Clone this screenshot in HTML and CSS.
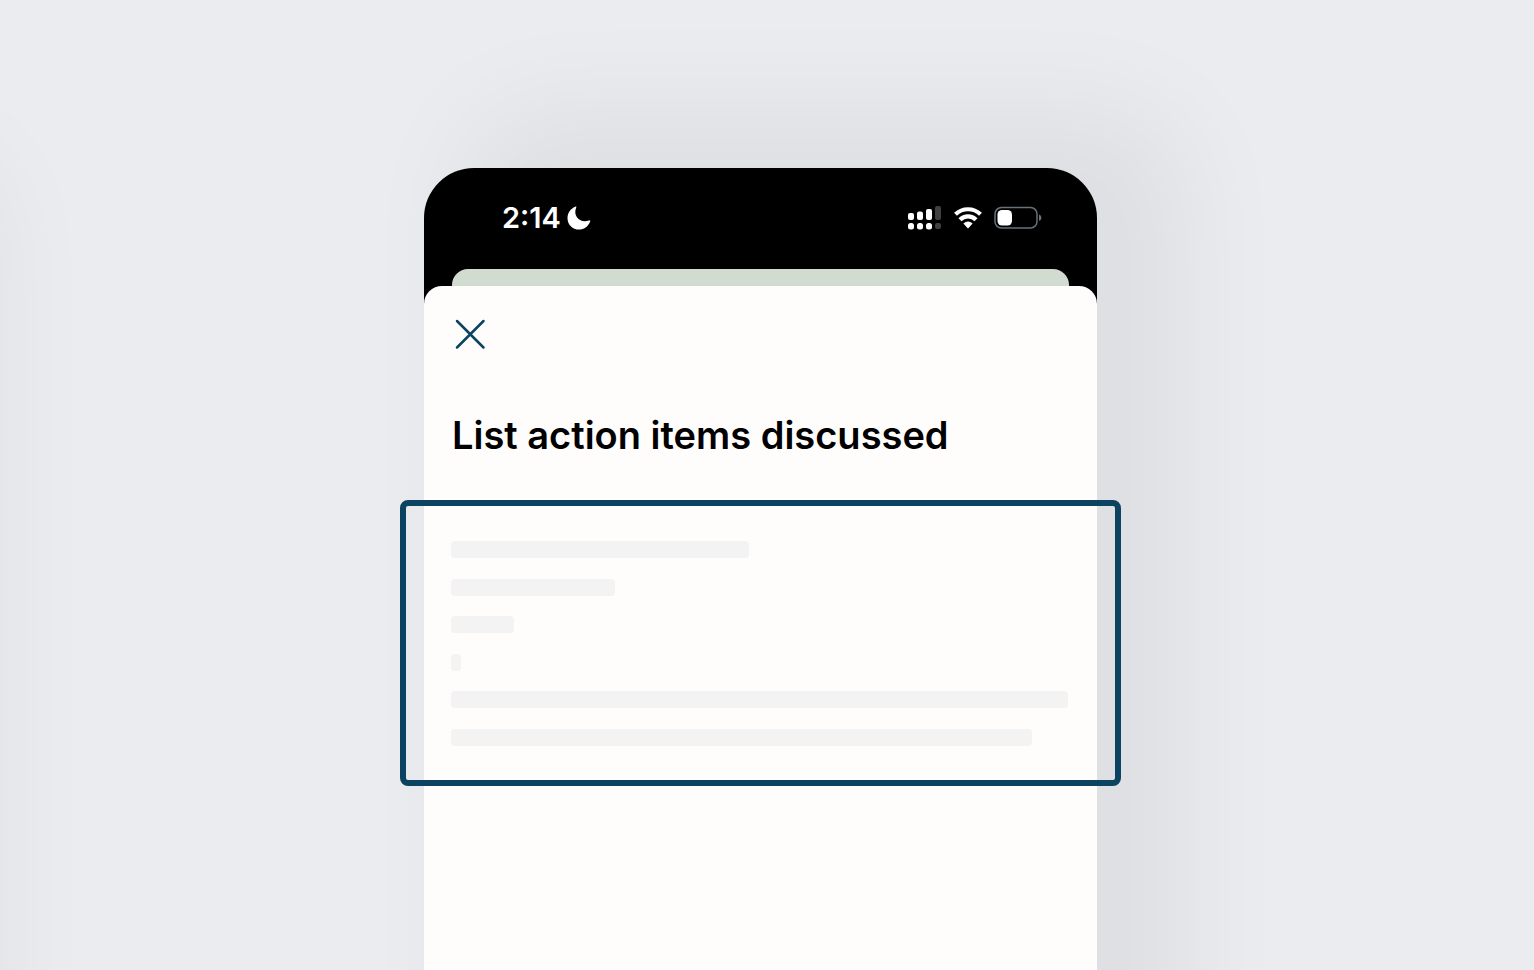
FILE: index.html
```html
<!DOCTYPE html>
<html lang="en">
<head>
<meta charset="utf-8">
<meta name="viewport" content="width=device-width, initial-scale=1">
<title>List action items discussed</title>
<link rel="stylesheet" href="styles.css">
</head>
<body>
<main class="stage">
  <div class="phone">
    <header class="status">
      <div class="status-group clock">
        <time>2:14</time>
        <svg width="24" height="24" viewBox="0 0 24 24" aria-hidden="true"><path d="M8.200.8C9.200.2 9.700.6 9.200 1.500C5.800 10 12.500 17.300 21.800 14.600C23.100 14.200 23.600 14.600 23.100 15.700C21 20.600 16.800 23.600 12 23.600C5.600 23.600.5 18.600.5 12.200C.5 7 3.500 2.800 8.200.8Z" fill="#fff"/></svg>
      </div>
      <div class="status-group radios">
        <svg width="34" height="24" viewBox="0 0 34 24" aria-hidden="true">
          <g fill="#fff">
            <rect x="0" y="7" width="6" height="7" rx="2"/><rect x="9" y="5.500" width="6" height="8.500" rx="2"/><rect x="18" y="3" width="6" height="11" rx="2"/>
            <rect x="0" y="17" width="6" height="6.500" rx="2.500"/><rect x="9" y="17" width="6" height="6.500" rx="2.500"/><rect x="18" y="17" width="6" height="6.500" rx="2.500"/>
          </g>
          <g fill="#404040"><rect x="27" y="0" width="6" height="14" rx="2"/><rect x="27" y="17" width="6" height="6" rx="2"/></g>
        </svg>
        <svg width="28" height="24" viewBox="0 0 28 24" aria-hidden="true">
          <g fill="none" stroke="#fff" stroke-width="4.200"><path d="M1.500 8.300A18 18 0 0 1 26.500 8.300"/><path d="M6 13.700A11.200 11.200 0 0 1 22 13.700"/></g>
          <path d="M9.400 17.400Q14 13.800 18.600 17.400L14.600 21.900Q14 22.500 13.400 21.900Z" fill="#fff"/>
        </svg>
        <svg width="48" height="24" viewBox="0 0 48 24" aria-hidden="true">
          <rect x="1" y="1.500" width="42" height="20.500" rx="6.500" fill="none" stroke="#66727b" stroke-width="1.500"/>
          <rect x="3.500" y="4" width="14.500" height="15.500" rx="4.500" fill="#fff"/>
          <path d="M45 8.500Q47.500 9.500 47.500 11.700Q47.500 14 45 15Z" fill="#66727b"/>
        </svg>
      </div>
    </header>
    <div class="back-sheet"></div>
    <section class="sheet">
      <button class="close" type="button" aria-label="Close">
        <svg width="32" height="32" viewBox="0 0 32 32" aria-hidden="true"><path d="M3 3L29.500 29.500M29.500 3L3 29.500" stroke="#0b4361" stroke-width="2.500" stroke-linecap="round"/></svg>
      </button>
      <h1 class="title">List action items discussed</h1>
      <div class="highlight" role="status" aria-label="Loading">
        <div class="lines">
          <span class="line" style="width:48.300%"></span>
          <span class="line" style="width:26.500%"></span>
          <span class="line" style="width:10.200%"></span>
          <span class="line" style="width:1.600%"></span>
          <span class="line" style="width:100%"></span>
          <span class="line" style="width:94.200%"></span>
        </div>
      </div>
    </section>
  </div>
</main>
</body>
</html>
```
FILE: styles.css
```css
* { box-sizing: border-box; }

body {
  margin: 0;
  background: #ebecf0;
  font-family: Inter, "Liberation Sans", sans-serif;
}

.stage {
  position: relative;
  display: grid;
  grid-template-columns: 424fr 673fr 437fr;
  min-height: 100vh;
  padding-top: 168px;
  overflow: hidden;
}

.phone,
.stage::before {
  border-radius: 50px 50px 0 0;
  background: #000;
  box-shadow: 65px -35px 110px 25px rgba(0, 0, 0, 0.055);
}

/* Neighbouring phone, outside the left edge: only its shadow shows */
.stage::before {
  content: "";
  position: absolute;
  top: 208px;
  right: calc(100% + 95px);
  bottom: -200px;
  width: 44%;
}

/* The phone runs on past the bottom edge of the stage */
.phone {
  grid-column: 2;
  display: flex;
  flex-direction: column;
  margin-bottom: -200px;
}

.status {
  display: flex;
  justify-content: space-between;
  align-items: center;
  height: 101px;
  padding: 0 55px 2px 78px;
  color: #fff;
}

.status-group {
  display: flex;
  align-items: center;
}

.status svg { display: block; }

.clock {
  gap: 6px;
  font-size: 29px;
  line-height: 32px;
  font-weight: 600;
}

.radios { gap: 12px; }

.back-sheet {
  height: 17px;
  margin: 0 28px;
  border-radius: 16px 16px 0 0;
  background: #d2dbd0;
}

.sheet {
  flex: 1;
  padding: 32px 28px;
  border-radius: 18px 18px 0 0;
  background: #fefdfc;
}

.close {
  display: block;
  margin: 0 2px;
  padding: 0;
  border: 0;
  background: none;
}

.close svg { display: block; }

.title {
  margin: 60px 0 40px;
  font-size: 38px;
  line-height: 50px;
  font-weight: 600;
  color: #000;
}

.highlight {
  margin: 0 -52px;
  padding: 35px 47px 34px 45px;
  border: 6px solid #0b4361;
  border-radius: 8px;
}

.lines {
  display: flex;
  flex-direction: column;
  justify-content: space-between;
  height: 205px;
}

.line {
  height: 17px;
  border-radius: 4px;
  background: #f3f3f3;
}
```
